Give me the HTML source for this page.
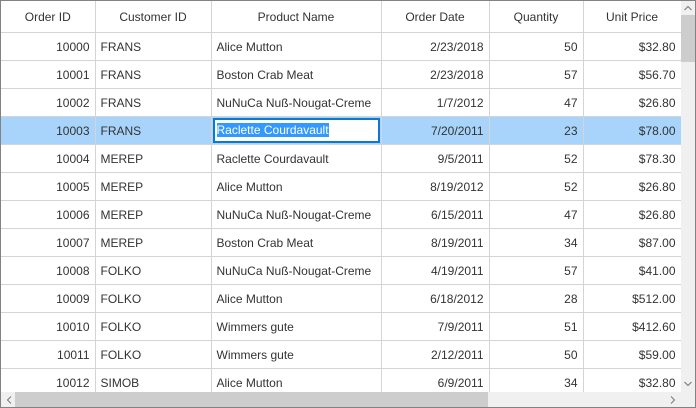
<!DOCTYPE html><html><head><style>
body{margin:0;width:696px;height:408px;overflow:hidden;background:#fff;font-family:"Liberation Sans",sans-serif;font-size:12px;color:#333}
.wrap{position:absolute;left:0;top:0;width:694px;height:406px;border:1px solid #828282;overflow:hidden}
table{border-collapse:collapse;table-layout:fixed;position:absolute;left:0;top:0}
td,th{border-right:1px solid #d4d4d4;border-bottom:1px solid #d4d4d4;padding:0 5px;white-space:nowrap;overflow:hidden}
th{height:31px;font-weight:normal;text-align:center;color:#333}
td{height:27px}
.r{text-align:right}
tr.sel td{background:#a8d4fb}
.ed{position:relative}
.ed div{position:absolute;left:1px;top:1px;right:1px;bottom:1px;border:2px solid #0a78d7;background:#fff;line-height:21px;padding-left:2px}
.ed span{background:#3399ff;color:#fff}
.vs{position:absolute;left:680px;top:0;width:14px;height:391px;background:#f0f0f0}
.hs{position:absolute;left:0;top:391px;width:694px;height:15px;background:#f0f0f0}
.ar{position:absolute;color:#777;font-size:10px}
</style></head><body><div class="wrap">
<table>
<colgroup><col style="width:94px"><col style="width:116px"><col style="width:170px"><col style="width:108px"><col style="width:94px"><col style="width:98px"></colgroup>
<tr><th>Order ID</th><th>Customer ID</th><th>Product Name</th><th>Order Date</th><th>Quantity</th><th>Unit Price</th></tr>
<tr><td class="r">10000</td><td>FRANS</td><td>Alice Mutton</td><td class="r">2/23/2018</td><td class="r">50</td><td class="r">$32.80</td></tr>
<tr><td class="r">10001</td><td>FRANS</td><td>Boston Crab Meat</td><td class="r">2/23/2018</td><td class="r">57</td><td class="r">$56.70</td></tr>
<tr><td class="r">10002</td><td>FRANS</td><td>NuNuCa Nuß-Nougat-Creme</td><td class="r">1/7/2012</td><td class="r">47</td><td class="r">$26.80</td></tr>
<tr class="sel"><td class="r">10003</td><td>FRANS</td><td class="ed"><div><span>Raclette Courdavault</span></div></td><td class="r">7/20/2011</td><td class="r">23</td><td class="r">$78.00</td></tr>
<tr><td class="r">10004</td><td>MEREP</td><td>Raclette Courdavault</td><td class="r">9/5/2011</td><td class="r">52</td><td class="r">$78.30</td></tr>
<tr><td class="r">10005</td><td>MEREP</td><td>Alice Mutton</td><td class="r">8/19/2012</td><td class="r">52</td><td class="r">$26.80</td></tr>
<tr><td class="r">10006</td><td>MEREP</td><td>NuNuCa Nuß-Nougat-Creme</td><td class="r">6/15/2011</td><td class="r">47</td><td class="r">$26.80</td></tr>
<tr><td class="r">10007</td><td>MEREP</td><td>Boston Crab Meat</td><td class="r">8/19/2011</td><td class="r">34</td><td class="r">$87.00</td></tr>
<tr><td class="r">10008</td><td>FOLKO</td><td>NuNuCa Nuß-Nougat-Creme</td><td class="r">4/19/2011</td><td class="r">57</td><td class="r">$41.00</td></tr>
<tr><td class="r">10009</td><td>FOLKO</td><td>Alice Mutton</td><td class="r">6/18/2012</td><td class="r">28</td><td class="r">$512.00</td></tr>
<tr><td class="r">10010</td><td>FOLKO</td><td>Wimmers gute</td><td class="r">7/9/2011</td><td class="r">51</td><td class="r">$412.60</td></tr>
<tr><td class="r">10011</td><td>FOLKO</td><td>Wimmers gute</td><td class="r">2/12/2011</td><td class="r">50</td><td class="r">$59.00</td></tr>
<tr><td class="r">10012</td><td>SIMOB</td><td>Alice Mutton</td><td class="r">6/9/2011</td><td class="r">34</td><td class="r">$32.80</td></tr>
</table>
<div class="vs"><div style="position:absolute;left:0;top:14px;width:14px;height:47px;background:#cdcdcd"></div>
<svg class="ar" style="left:3px;top:4px" width="8" height="6"><path d="M0.5 5L4 1.5 7.5 5" stroke="#777" fill="none"/></svg>
<svg class="ar" style="left:3px;top:380px" width="8" height="6"><path d="M0.5 1L4 4.5 7.5 1" stroke="#777" fill="none"/></svg></div>
<div class="hs"><div style="position:absolute;left:14px;top:0;width:473px;height:15px;background:#cdcdcd"></div>
<svg class="ar" style="left:5px;top:4px" width="6" height="8"><path d="M5 0.5L1.5 4 5 7.5" stroke="#777" fill="none"/></svg>
<svg class="ar" style="left:669px;top:4px" width="6" height="8"><path d="M1 0.5L4.5 4 1 7.5" stroke="#777" fill="none"/></svg></div>
</div></body></html>
